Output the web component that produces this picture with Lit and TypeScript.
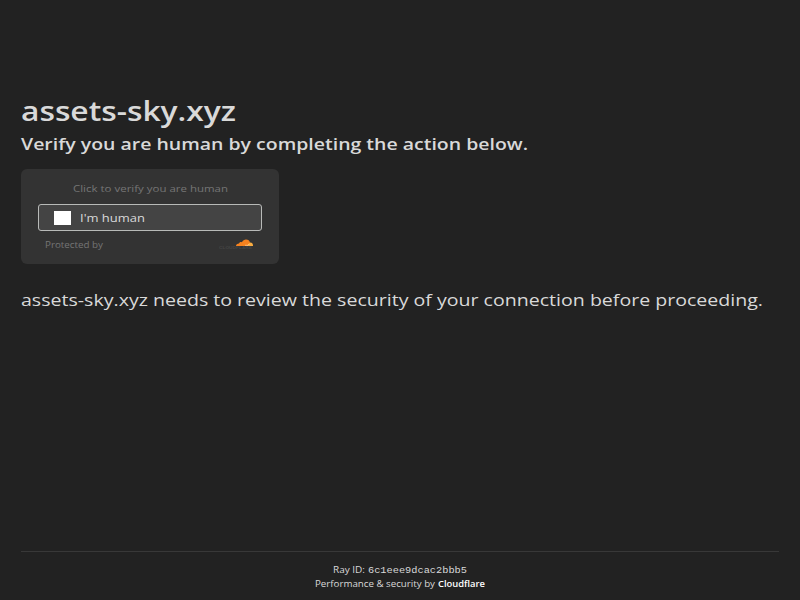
import { LitElement, html, css } from "lit";
import { customElement, property } from "lit/decorators.js";

/** A single line of text fitted to a given width. */
@customElement("fit-line")
class FitLine extends LitElement {
  @property() text = "";
  @property({ type: Number }) w = 100;
  @property({ type: Number }) h = 20;
  @property({ type: Number }) base = 15;

  static styles = css`
    :host { display: block; flex: none; }
    svg { display: block; overflow: visible; }
    text { fill: currentColor; white-space: pre; }
  `;

  render() {
    return html`<svg width=${this.w} height=${this.h}>
      <text x="0" y=${this.base} textLength=${this.w} lengthAdjust="spacingAndGlyphs">${this.text}</text>
    </svg>`;
  }
}

@customElement("app-root")
class AppRoot extends LitElement {
  static styles = css`
    :host {
      display: flex;
      flex-direction: column;
      box-sizing: border-box;
      height: 600px;
      padding: 96px 21px 0;
      background: #222;
      color: #d9d9d9;
      font-family: "Open Sans", "Noto Sans", sans-serif;
    }
    .title { font-size: 27px; font-weight: 600; margin-left: -0.5px; }
    .subtitle { font-size: 16px; font-weight: 600; margin-top: 4px; }
    .card {
      box-sizing: border-box;
      width: 258px;
      height: 95px;
      margin-top: 9px;
      padding: 12px 17px 0;
      border-radius: 6px;
      background: #333;
      color: #757575;
    }
    .prompt { font-size: 9.8px; margin-left: 34.5px; }
    .button {
      display: flex;
      align-items: center;
      box-sizing: border-box;
      width: 224px;
      height: 27px;
      margin-top: 7px;
      padding-left: 15px;
      gap: 9px;
      border: 1px solid #b8bab8;
      border-radius: 3px;
      background: #444;
      color: #d9d9d9;
      font-size: 10.6px;
      font-weight: 500;
    }
    .box { width: 17px; height: 14px; background: #fff; }
    .brand {
      display: flex;
      justify-content: space-between;
      padding: 7px 8px 0 7px;
      font-size: 8.6px;
    }
    .logo { display: block; }
    .wordmark { font: 700 3.4px "Liberation Sans", sans-serif; fill: #454545; }
    .note { font-size: 16px; margin-top: 24px; margin-left: -0.5px; }
    .footer {
      display: flex;
      flex-direction: column;
      align-items: center;
      margin-top: auto;
      height: 49.5px;
      padding-top: 11px;
      box-sizing: border-box;
      border-top: 1px solid #383838;
      font-size: 8.7px;
    }
    .row { display: flex; gap: 3px; }
    .mono { font-family: "Liberation Mono", monospace; font-size: 8.3px; }
    .strong { color: #fff; font-weight: 600; }
  `;

  render() {
    return html`
      <fit-line class="title" text="assets-sky.xyz" w="215" h="36" base="25"></fit-line>
      <fit-line class="subtitle" text="Verify you are human by completing the action below." w="507" h="24" base="14"></fit-line>
      <div class="card">
        <fit-line class="prompt" text="Click to verify you are human" w="155" h="16" base="11"></fit-line>
        <div class="button">
          <div class="box"></div>
          <fit-line text="I'm human" w="65" h="14" base="11"></fit-line>
        </div>
        <div class="brand">
          <fit-line text="Protected by" w="58" h="12" base="10"></fit-line>
          <svg class="logo" width="35" height="12" viewBox="0 0 35 12">
            <path fill="#f6821f" d="M17 8c0-1.600 1.300-2.500 3-2.500.2-1.500 1.900-1.900 2.900-1.300C23.900 2.400 25.300 1.400 27 1.400c2.200 0 3.600 1.200 4 3.100L30.500 8z" />
            <path fill="#fbad41" d="M28.500 8l1-2.200L31.200 4.500c2 .1 3 1.600 2.800 3.500z" />
            <path stroke="#ffe9c8" stroke-width="0.900" d="M26 7.300h3l1.500-1.500" fill="none" opacity="0.600" />
            <text class="wordmark" x="0" y="11.200" textLength="33" lengthAdjust="spacingAndGlyphs">CLOUDFLARE</text>
          </svg>
        </div>
      </div>
      <fit-line class="note" text="assets-sky.xyz needs to review the security of your connection before proceeding." w="742" h="24" base="18"></fit-line>
      <div class="footer">
        <div class="row">
          <fit-line text="Ray ID:" w="32" h="14" base="10"></fit-line>
          <fit-line class="mono" text="6c1eee9dcac2bbb5" w="99" h="14" base="10"></fit-line>
        </div>
        <div class="row">
          <fit-line text="Performance &amp; security by" w="120" h="14" base="10"></fit-line>
          <fit-line class="strong" text="Cloudflare" w="47" h="14" base="10"></fit-line>
        </div>
      </div>
    `;
  }
}
